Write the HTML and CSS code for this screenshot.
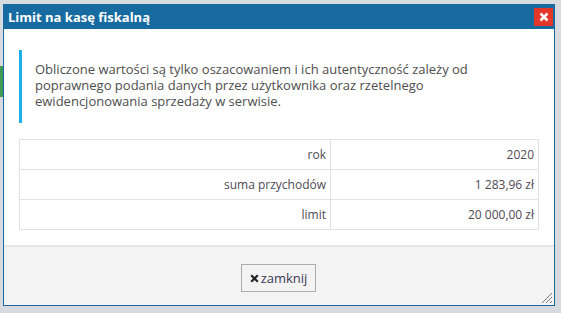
FILE: index.html
```html
<!DOCTYPE html>
<html lang="pl">
<head>
    <meta charset="UTF-8">
    <link rel="stylesheet" href="styles.css">
    <title>Limit na kasę fiskalną</title>
</head>
<body>
    <div class="backdrop">
        <div class="stripe green"></div>
    </div>

    <!-- dialog -->
    <div class="dialog">
        <div class="titlebar">
            <span class="title">Limit na kasę fiskalną</span>
            <span class="close">
                <svg width="10" height="10" viewBox="0 0 10 10"><path d="M1.5 1.5L8.5 8.5M8.5 1.5L1.5 8.5" stroke="#fff" stroke-width="2.6"/></svg>
            </span>
        </div>
        <div class="content">
            <div class="callout">
                Obliczone wartości są tylko oszacowaniem i ich autentyczność zależy od poprawnego podania danych przez użytkownika oraz rzetelnego ewidencjonowania sprzedaży w serwisie.
            </div>
            <table class="table">
                <tr>
                    <td>rok</td>
                    <td>2020</td>
                </tr>
                <tr>
                    <td>suma przychodów</td>
                    <td>1 283,96 zł</td>
                </tr>
                <tr>
                    <td>limit</td>
                    <td>20 000,00 zł</td>
                </tr>
            </table>
        </div>
        <div class="footer">
            <button class="btn">
                <svg width="9" height="9" viewBox="0 0 9 9"><path d="M1.2 1.2L7.8 7.8M7.8 1.2L1.2 7.8" stroke="#222" stroke-width="2.2"/></svg>zamknij
            </button>
            <svg class="grip" width="13" height="13" viewBox="0 0 13 13"><path d="M12 2L2 12M12 6L6 12M12 10L10 12" stroke="#777" stroke-width="1"/></svg>
        </div>
    </div>
</body>
</html>
```

FILE: styles.css
```css
body {
    margin: 0;
    padding: 4px 0 0 3px;
    background-color: #d7dade;
    font-family: "Open Sans", "Liberation Sans", sans-serif;
    font-size: 13px;
    color: #4e4e4e;
}
.backdrop {
    position: absolute;
    left: 0;
    top: 0;
    width: 561px;
    height: 313px;
}
.stripe.green {
    position: absolute;
    left: 0;
    top: 66px;
    width: 4px;
    height: 31px;
    background-color: #3f9a54;
}
.dialog {
    position: relative;
    width: 550px;
    border: 1px solid #1a6aa0;
    border-top: none;
    background-color: #fff;
}
.titlebar {
    height: 25px;
    background-color: #186ba0;
    display: flex;
    align-items: center;
    justify-content: space-between;
    padding: 0 2px 0 5px;
    margin: 0 -1px;
}
.title {
    color: #fff;
    font-weight: bold;
    font-size: 13px;
}
.close {
    width: 19px;
    height: 18px;
    background-color: #e3372a;
    display: flex;
    align-items: center;
    justify-content: center;
}
.content {
    padding: 21px 15px 15px;
}
.callout {
    border-left: 3px solid #1bb0e6;
    padding: 11px 14px 14px 13px;
    line-height: 16px;
    height: 48px;
}
.table {
    margin-top: 16px;
    width: 520px;
    border-collapse: collapse;
    border: 1px solid #e2e2e2;
    font-size: 12px;
}
.table td {
    border: 1px solid #e2e2e2;
    height: 29px;
    padding: 0 4px 0 8px;
    text-align: right;
    color: #4f4a55;
}
.table td:first-child {
    width: 298px;
}
.footer {
    position: relative;
    border-top: 2px solid #e6e6e6;
    background-color: #f3f3f3;
    display: flex;
    justify-content: center;
    align-items: flex-start;
    padding: 17px 1px 0 0;
    box-sizing: border-box;
    height: 60px;
}
.btn {
    width: 75px;
    height: 28px;
    border: 1px solid #acacac;
    background-color: #f3f3f3;
    font-family: "Open Sans", "Liberation Sans", sans-serif;
    font-size: 13px;
    color: #3d3a55;
    display: flex;
    align-items: center;
    justify-content: center;
    gap: 2px;
    padding: 0;
}
.grip {
    position: absolute;
    right: 1px;
    bottom: 1px;
}
```
